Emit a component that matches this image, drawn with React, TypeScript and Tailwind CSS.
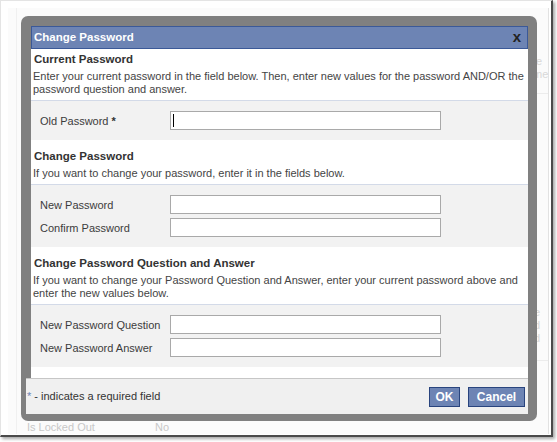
import React from "react";

const font = "font-['Liberation_Sans',Arial,sans-serif]";

function Field({ label, required, focused }: { label: string; required?: boolean; focused?: boolean }) {
  return (
    <div className="flex items-center h-[19px]">
      <div className="w-[139px] shrink-0 pl-[9px] text-[11px] leading-[14px] text-[#3c3c3c] whitespace-nowrap">
        {label}
        {required && <span className="font-bold text-[#333]"> *</span>}
      </div>
      <div className="w-[271px] shrink-0 h-[19px] bg-white border border-[#a9a9a9] flex items-center pl-[2px]">
        {focused && <span className="w-px h-[13px] bg-black" />}
      </div>
    </div>
  );
}

function Section({
  title,
  lines,
  top,
  children,
}: {
  title: string;
  lines: string[];
  top: string;
  children: React.ReactNode;
}) {
  return (
    <div className={top}>
      <div className="pl-[3px] text-[11.5px] leading-[14px] font-bold text-[#333]">{title}</div>
      <div className="pl-[2px] mt-[4px] pb-[4px] text-[11px] leading-[13px] text-[#444] whitespace-nowrap">
        {lines.map((l, i) => (
          <div key={i}>{l}</div>
        ))}
      </div>
      <div className="border-t border-[#d3dae8] bg-[#f2f2f2] pt-[10px] pb-[10px] flex flex-col gap-[4px]">
        {children}
      </div>
    </div>
  );
}

export default function App() {
  return (
    <div className={`w-[557px] h-[442px] bg-white relative overflow-hidden ${font}`}>
      {/* screenshot frame */}
      <div className="w-[553px] h-[437px] border-t border-l border-[#e4e4e4] border-r-2 border-b-2 border-r-[#4a4a4a] border-b-[#4a4a4a] shadow-[2px_2px_3px_rgba(0,0,0,0.35)] pt-[7px] pl-[7px] pr-[2px] pb-[1px]">
        {/* page behind the dialog */}
        <div className="h-full bg-[#fbfbfb] border-r border-[#e2e2e2] flex">
          <div className="w-[9px] border-r border-[#f0f0f0]" />
          <div className="flex-1 flex flex-col">
            <div className="flex justify-end pr-[2px] pt-[47px] text-[11px] leading-[13px] text-[#d8d8d8]">
              <div className="w-[13px]">
                <div>te</div>
                <div>me</div>
              </div>
            </div>
            <div className="ml-auto w-[16px] mt-[12px] border-t border-[#ececec]" />
            <div className="flex justify-end pr-[2px] pt-[212px] text-[11px] leading-[13px] text-[#d8d8d8]">
              <div className="w-[12px]">
                <div>e</div>
                <div>d</div>
                <div>d</div>
              </div>
            </div>
            <div className="ml-auto w-[16px] mt-[15px] border-t border-[#ececec]" />
            <div className="mt-auto flex pl-[10px] text-[11px] leading-[13px] text-[#c8c8c8]">
              <span className="w-[128px]">Is Locked Out</span>
              <span>No</span>
            </div>
          </div>
        </div>
      </div>

      {/* modal dialog */}
      <div className="absolute left-[21px] top-[16px] w-[516px] h-[405px] bg-[#808080] rounded-[7px] pt-[10px] pl-[10px] pr-[9px] flex flex-col">
        <div className="h-[23px] bg-[#6d84b4] border border-[#3b5998] flex items-center justify-between pl-[2px] pr-[6px]">
          <span className="text-[11.5px] font-bold text-white">Change Password</span>
          <span className="text-[15px] leading-none font-bold text-[#222] -mt-[3px]">x</span>
        </div>
        <div className="bg-white h-[329px] flex flex-col">
          <Section
            title="Current Password"
            top="pt-[3px]"
            lines={[
              "Enter your current password in the field below. Then, enter new values for the password AND/OR the",
              "password question and answer.",
            ]}
          >
            <Field label="Old Password" required focused />
          </Section>
          <Section
            title="Change Password"
            top="pt-[9px]"
            lines={["If you want to change your password, enter it in the fields below."]}
          >
            <Field label="New Password" />
            <Field label="Confirm Password" />
          </Section>
          <Section
            title="Change Password Question and Answer"
            top="pt-[9px]"
            lines={[
              "If you want to change your Password Question and Answer, enter your current password above and",
              "enter the new values below.",
            ]}
          >
            <Field label="New Password Question" />
            <Field label="New Password Answer" />
          </Section>
        </div>
        <div className="-ml-[5px] h-[36px] bg-[#f0f0f0] border-t border-[#c6c6c6] flex items-center justify-between pl-[1px] pr-[3px]">
          <span className="text-[11px] text-[#333]">
            <span className="text-[#6d84b4]">*</span> - indicates a required field
          </span>
          <div className="flex gap-[8px]">
            <button className="h-[20px] w-[31px] bg-[#6d84b4] border border-[#29447e] text-white text-[12px] font-bold leading-none">
              OK
            </button>
            <button className="h-[20px] w-[57px] bg-[#6d84b4] border border-[#29447e] text-white text-[12px] font-bold leading-none">
              Cancel
            </button>
          </div>
        </div>
      </div>
    </div>
  );
}
